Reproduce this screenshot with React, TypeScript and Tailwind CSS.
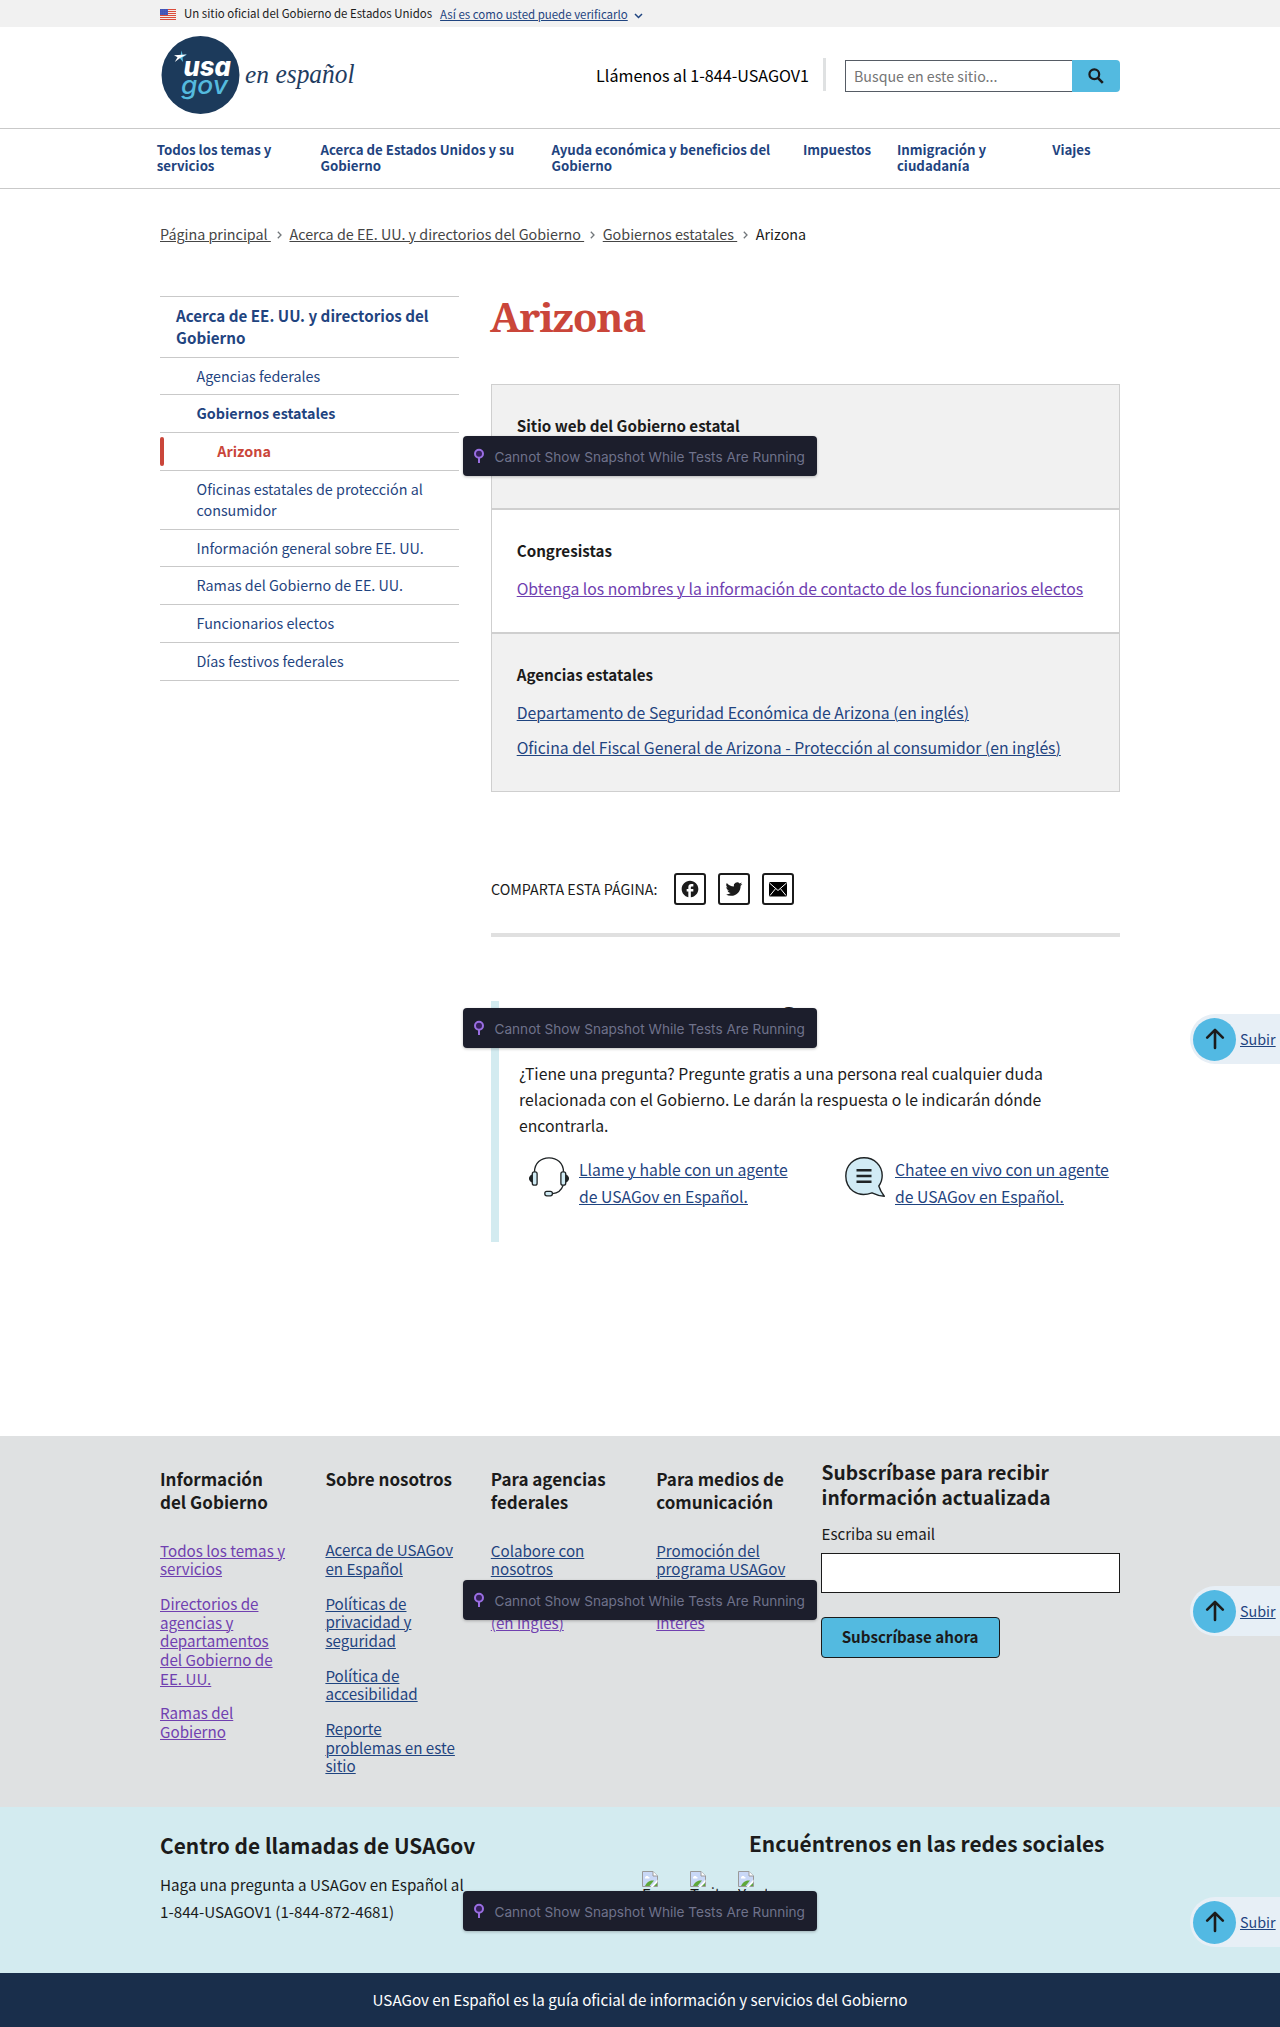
import React from 'react';

const LINK = 'text-[#1f4480] underline decoration-1 underline-offset-[1px]';
const VISITED = 'text-[#7040b0] underline decoration-1 underline-offset-[1px]';

function Lines({ text }: { text: string }) {
  return (
    <>
      {text.split('|').map((line, i) => (
        <React.Fragment key={line}>
          {i > 0 && <br />}
          {line}
        </React.Fragment>
      ))}
    </>
  );
}

function Flag() {
  return (
    <svg width="16" height="11" viewBox="0 0 16 11" className="mt-[9px] shrink-0">
      <rect width="16" height="11" fill="#f3ece9" />
      {[0, 2, 4, 6, 8, 10].map((y) => (
        <rect key={y} y={y} width="16" height="1" fill="#db4b3a" />
      ))}
      <rect width="8" height="6" fill="#3145b0" />
      {[1, 3, 5].map((y) =>
        [1, 3, 5, 7].map((x) => <rect key={`${x}-${y}`} x={x - 0.3} y={y - 0.3} width="0.7" height="0.7" fill="#dfe3ff" />),
      )}
    </svg>
  );
}

function Logo() {
  return (
    <svg width="200" height="80" viewBox="0 0 200 80" className="-mt-[2px]">
      <circle cx="40.5" cy="40" r="39" fill="#1c3a5b" />
      <path d="M21.6 15.5 L22.6 20 L27 19.5 L22.6 22.6 L23 27 L20 23.5 Z" fill="#54badf" />
      <path d="M14 20.3 L26.5 19.6 L20.5 22.8 L14.8 27 L17.5 22.3 Z" fill="#ffffff" />
      <text x="23.5" y="40.5" textLength="47.5" lengthAdjust="spacingAndGlyphs" fontFamily="Inter" fontWeight="800" fontStyle="italic" fontSize="26.5" fill="#ffffff">usa</text>
      <text x="21" y="58.5" textLength="47" lengthAdjust="spacingAndGlyphs" fontFamily="Inter" fontWeight="500" fontStyle="italic" fontSize="25" fill="#54badf">gov</text>
      <g fontFamily="'Liberation Serif', serif" fontStyle="italic" fill="#1f3d61">
        <text x="85" y="47.5" textLength="24" lengthAdjust="spacingAndGlyphs" fontSize="26">en</text>
        <text x="115.5" y="47.5" textLength="79" lengthAdjust="spacingAndGlyphs" fontSize="28">español</text>
      </g>
    </svg>
  );
}

function Chevron() {
  return (
    <svg width="5" height="8" viewBox="0 0 5 8" className="ml-[6px] mr-[7.6px] mt-[2px]" fill="none" stroke="#71767a" strokeWidth="1.3">
      <path d="M0.8 0.8 L4 4 L0.8 7.2" />
    </svg>
  );
}

function RunnerBadge({ className }: { className: string }) {
  return (
    <div className={`absolute left-[463px] flex h-10 w-[354px] items-center rounded bg-[#1c1e2c] shadow-[0_1px_3px_rgba(0,0,0,0.25)] ${className}`}>
      <svg width="12" height="16" viewBox="0 0 12 16" className="-mt-px ml-[10px]" fill="none" stroke="#9a6ee2">
        <circle cx="6" cy="5.8" r="4" strokeWidth="2" fill="#36205c" />
        <path d="M6 10 V15" strokeWidth="2" />
      </svg>
      <span className="ml-[9.5px] mt-[2px] whitespace-nowrap font-['Inter',sans-serif] text-[13.6px] leading-5 text-[#6f728b]">
        Cannot Show Snapshot While Tests Are Running
      </span>
    </div>
  );
}

function BackToTop({ className }: { className: string }) {
  return (
    <a className={`absolute right-0 flex h-[50px] w-[90px] items-center rounded-l-full bg-[#e7eff6] ${className}`}>
      <span className="ml-[3px] flex h-[43px] w-[43px] shrink-0 items-center justify-center rounded-full bg-[#52b9e3]">
        <svg width="20" height="22" viewBox="0 0 20 22" fill="none" stroke="#1b1b1b" strokeWidth="2.6" strokeLinecap="round" strokeLinejoin="round">
          <path d="M10 20 V2 M2.2 9.6 L10 1.8 L17.8 9.6" />
        </svg>
      </span>
      <span className={`-mt-px ml-1 text-[14.35px] leading-[21px] ${LINK}`}>Subir</span>
    </a>
  );
}

const navItems = [
  { text: 'Todos los temas y|servicios', width: 'w-[163.7px]' },
  { text: 'Acerca de Estados Unidos y su|Gobierno', width: 'w-[231px]' },
  { text: 'Ayuda económica y beneficios del|Gobierno', width: 'w-[251.5px]' },
  { text: 'Impuestos', width: 'w-[94px]' },
  { text: 'Inmigración y|ciudadanía', width: 'w-[155.3px]' },
  { text: 'Viajes', width: 'w-[60px]' },
];

const sideItems = [
  { text: 'Agencias federales', cls: 'h-[37px] pl-[36.5px]' },
  { text: 'Gobiernos estatales', cls: 'h-[38px] pl-[36.5px] font-bold' },
  { text: 'Arizona', cls: 'h-[38px] pl-[57.3px] font-bold text-[#ca463a]', current: true },
  { text: 'Oficinas estatales de protección al|consumidor', cls: 'h-[59px] pl-[36.5px]' },
  { text: 'Información general sobre EE. UU.', cls: 'h-[37px] pl-[36.5px]' },
  { text: 'Ramas del Gobierno de EE. UU.', cls: 'h-[38px] pl-[36.5px]' },
  { text: 'Funcionarios electos', cls: 'h-[38px] pl-[36.5px]' },
  { text: 'Días festivos federales', cls: 'h-[39px] border-b pl-[36.5px]' },
];

const footerColumns = [
  {
    title: 'Información|del Gobierno',
    offset: 'h-[73.7px]',
    links: [
      { text: 'Todos los temas y|servicios', visited: true },
      { text: 'Directorios de|agencias y|departamentos|del Gobierno de|EE. UU.', visited: true },
      { text: 'Ramas del|Gobierno', visited: true },
    ],
  },
  {
    title: 'Sobre nosotros',
    offset: 'h-[73.3px]',
    links: [
      { text: 'Acerca de USAGov|en Español', visited: false },
      { text: 'Políticas de|privacidad y|seguridad', visited: false },
      { text: 'Política de|accesibilidad', visited: false },
      { text: 'Reporte|problemas en este|sitio', visited: false },
    ],
  },
  {
    title: 'Para agencias|federales',
    offset: 'h-[73.7px]',
    links: [
      { text: 'Colabore con|nosotros', visited: false },
      { text: 'Recursos|(en inglés)', visited: true },
    ],
  },
  {
    title: 'Para medios de|comunicación',
    offset: 'h-[73.7px]',
    links: [
      { text: 'Promoción del|programa USAGov', visited: false },
      { text: 'Artículos de|interés', visited: true },
    ],
  },
];

function Header() {
  return (
    <header>
      <div className="flex h-[27px] bg-[#f1f1f1] pl-[160px]">
        <Flag />
        <span className="ml-2 mt-[5px] text-[11.46px] leading-4">Un sitio oficial del Gobierno de Estados Unidos</span>
        <span className={`ml-2 mt-[6px] text-[11.48px] leading-4 ${LINK}`}>Así es como usted puede verificarlo</span>
        <svg width="9" height="6" viewBox="0 0 9 6" className="ml-[6px] mt-[12.5px]" fill="none" stroke="#1f4480" strokeWidth="1.5">
          <path d="M1 1 L4.5 4.5 L8 1" />
        </svg>
      </div>
      <div className="flex h-[101px] items-center px-[160px] pb-[3px]">
        <Logo />
        <span className="-mt-[2px] ml-auto text-[16.13px] leading-6 text-black">Llámenos al 1-844-USAGOV1</span>
        <div className="-mt-[3px] ml-[14px] h-[33px] w-[3px] bg-[#dfe1e2]" />
        <div className="ml-[19px] flex h-8 w-[275px]">
          <div className="flex w-[227px] items-center border border-r-0 border-[#565c65] pl-[8px] pt-px text-[14.22px] text-[#757575]">
            Busque en este sitio...
          </div>
          <button className="flex w-12 items-center justify-center rounded-r bg-[#53bae0]">
            <svg width="16" height="16" viewBox="0 0 16 16" fill="none" stroke="#1b1b1b" strokeWidth="2.2">
              <circle cx="6.3" cy="6.3" r="4.9" />
              <path d="M9.8 9.8 L14.8 14.8" strokeWidth="2.6" />
            </svg>
          </button>
        </div>
      </div>
      <nav className="flex h-[61px] border-y border-[#c9c9c9] pl-[156.7px] pt-[12.6px] text-[13.27px] font-bold leading-[16.2px] text-[#1f4480]">
        {navItems.map((n) => (
          <a key={n.text} className={`shrink-0 whitespace-nowrap ${n.width}`}>
            <Lines text={n.text} />
          </a>
        ))}
      </nav>
    </header>
  );
}

function Breadcrumbs() {
  const crumb = 'whitespace-pre underline decoration-1 underline-offset-[1px]';
  return (
    <div className="mt-[33px] flex h-[23px] items-center pl-[160px] text-[14.33px] leading-[23px] text-[#454545]">
      <a className={crumb}>{'Página principal\u00a0'}</a>
      <Chevron />
      <a className={crumb}>{'Acerca de EE. UU. y directorios del Gobierno\u00a0'}</a>
      <Chevron />
      <a className={crumb}>{'Gobiernos estatales\u00a0'}</a>
      <Chevron />
      <span className="text-[#1b1b1b]">Arizona</span>
    </div>
  );
}

function Sidebar() {
  return (
    <ul className="w-[299px] text-[14.33px] leading-[21px] text-[#1f4480]">
      <li className="h-[61px] border-t border-[#c9c9c9] pl-4 pt-[7px] text-[15.18px] font-bold leading-[22px]">
        <Lines text="Acerca de EE. UU. y directorios del|Gobierno" />
      </li>
      {sideItems.map((s) => (
        <li key={s.text} className={`relative border-t border-[#c9c9c9] pt-[7px] ${s.cls}`}>
          {s.current && <span className="absolute left-0 top-1 h-[29px] w-1 rounded-full bg-[#ca463a]" />}
          <Lines text={s.text} />
        </li>
      ))}
    </ul>
  );
}

function ShareBar() {
  const box = 'flex h-8 w-8 items-center justify-center rounded-[3px] border-2 border-[#1b1b1b]';
  return (
    <div className="mt-[81px] flex items-center gap-3">
      <span className="mr-[5px] w-[166px] whitespace-nowrap text-[14.28px] leading-6">COMPARTA ESTA PÁGINA:</span>
      <a className={box}>
        <svg width="20" height="20" viewBox="0 0 24 24" fill="#1b1b1b">
          <path d="M22 12c0-5.52-4.48-10-10-10S2 6.48 2 12c0 4.84 3.44 8.87 8 9.8V15H8v-3h2V9.5C10 7.57 11.57 6 13.5 6H16v3h-2c-.55 0-1 .45-1 1v2h3v3h-3v6.95c5.05-.5 9-4.76 9-9.95z" />
        </svg>
      </a>
      <a className={box}>
        <svg width="20" height="20" viewBox="0 0 24 24" fill="#1b1b1b">
          <path d="M22 5.9c-.7.3-1.5.5-2.4.6.9-.5 1.5-1.3 1.8-2.2-.8.5-1.7.8-2.6 1a4.1 4.1 0 0 0-7 3.7A11.6 11.6 0 0 1 3.4 4.7a4.1 4.1 0 0 0 1.3 5.5c-.7 0-1.3-.2-1.9-.5 0 2 1.4 3.7 3.3 4.1-.6.2-1.2.2-1.9.1.5 1.6 2 2.8 3.8 2.8A8.3 8.3 0 0 1 2 18.4 11.6 11.6 0 0 0 8.3 20.2c7.5 0 11.9-6.3 11.6-12.2.8-.6 1.5-1.3 2.1-2.1z" />
        </svg>
      </a>
      <a className={box}>
        <svg width="18" height="16" viewBox="0 0 18 16">
          <rect x="0" y="1" width="18" height="14.5" rx="1.2" fill="#000" />
          <path d="M0.5 2 L9 9.5 L17.5 2 M1 14.5 L6.6 7.6 M17 14.5 L11.4 7.6" fill="none" stroke="#fff" strokeWidth="1" />
        </svg>
      </a>
    </div>
  );
}

function ContactBlock() {
  return (
    <section className="mt-16 h-[241px] border-l-8 border-[#d3ebf0] pl-5">
      <h2 className="flex h-[60px] w-[278px] justify-between whitespace-nowrap pt-[5px] font-['Noto_Serif',serif] text-[27px] font-bold leading-8">
        <span>¿Tiene preguntas</span>
        <span className="-mt-[5px]">?</span>
      </h2>
      <p className="whitespace-nowrap text-[15.75px] leading-[26px]">
        <Lines text="¿Tiene una pregunta? Pregunte gratis a una persona real cualquier duda|relacionada con el Gobierno. Le darán la respuesta o le indicarán dónde|encontrarla." />
      </p>
      <div className="ml-[10px] mt-[18px] flex whitespace-nowrap text-[15.75px] leading-[27px]">
        <div className="flex w-[316px] shrink-0 gap-[10px]">
          <svg width="40" height="40" viewBox="0 0 40 40" fill="none" stroke="#1f2426" strokeWidth="1.3">
            <path d="M5.5 15 C5.5 6 12 0.8 20 0.8 C28 0.8 34.5 6 34.5 15" />
            <path d="M3.5 18 C-0.2 19.500 -0.2 23.500 3.500 25 Z M36.500 18 C40.200 19.500 40.200 23.500 36.500 25 Z" fill="#1f2426" strokeWidth="1.6" />
            <rect x="3.3" y="14.8" width="4.8" height="13.4" rx="2" fill="#cfeaf3" />
            <rect x="31.9" y="14.8" width="4.8" height="13.4" rx="2" fill="#cfeaf3" />
            <path d="M34.2 28.3 C32.5 33 29 36.4 23.5 36.7" />
            <rect x="15.8" y="34.4" width="7.6" height="4.4" rx="2" fill="#cfeaf3" />
          </svg>
          <a className={`-mt-px ${LINK}`}><Lines text="Llame y hable con un agente|de USAGov en Español." /></a>
        </div>
        <div className="flex gap-[10px]">
          <svg width="40" height="40" viewBox="0 0 40 40" className="shrink-0" fill="#d1ebf5" stroke="#1f2426" strokeWidth="1.4" strokeLinejoin="round">
            <path d="M27 35.8 C12 41.5 0.8 31.5 0.8 19 C0.8 8 9 0.8 19 0.8 C29.5 0.8 37.2 8.5 37.2 18.5 C37.2 22.5 36 26 33.8 29 C34.8 32.5 36.8 36 39.3 39.2 C34.8 39 30.5 37.5 27 35.8 Z" />
            <path d="M11.5 13.2 H26.5 M11.5 18.9 H26.5 M11.5 24.7 H26.5" strokeWidth="2.5" />
          </svg>
          <a className={`-mt-px ${LINK}`}><Lines text="Chatee en vivo con un agente|de USAGov en Español." /></a>
        </div>
      </div>
    </section>
  );
}

function Content() {
  return (
    <main className="w-[629px]">
      <h1 className="-ml-px -mt-1 font-['Noto_Serif',serif] text-[40.5px] font-bold leading-[49px] tracking-[-1.15px] text-[#ca463a]">Arizona</h1>
      <div className="mt-[43px] whitespace-nowrap text-[15.76px] leading-[25px]">
        <div className="h-[125px] border border-[#cfcfcf] bg-[#f1f1f1] pl-[24.7px] pt-7">
          <h3 className="text-[15.18px] font-bold leading-6">Sitio web del Gobierno estatal</h3>
        </div>
        <div className="h-[124px] border border-[#cfcfcf] pl-[24.7px] pt-7">
          <h3 className="text-[15.18px] font-bold leading-6">Congresistas</h3>
          <p className="mt-[14px]"><a className={VISITED}>Obtenga los nombres y la información de contacto de los funcionarios electos</a></p>
        </div>
        <div className="h-[159px] border border-[#cfcfcf] bg-[#f1f1f1] pl-[24.7px] pt-7">
          <h3 className="text-[15.18px] font-bold leading-6">Agencias estatales</h3>
          <p className="mt-[14px]"><a className={LINK}>Departamento de Seguridad Económica de Arizona (en inglés)</a></p>
          <p className="mt-[10px]"><a className={LINK}>Oficina del Fiscal General de Arizona - Protección al consumidor (en inglés)</a></p>
        </div>
      </div>
      <ShareBar />
      <div className="mt-7 h-1 bg-[#e0e0e0]" />
      <ContactBlock />
    </main>
  );
}

function BrokenImage({ alt }: { alt: string }) {
  return (
    <div className="w-12">
      <svg width="16" height="16" viewBox="0 0 16 16">
        <path d="M0.5 0.5 H11 L15.5 5 V15.5 H0.5 Z" fill="#c9d8f7" stroke="#9a9a9a" />
        <path d="M11 0.5 V5 H15.5" fill="#fff" stroke="#9a9a9a" />
        <path d="M3 7 C3 4.5 6.5 4.5 6.5 6 C8 6 8 7.5 7 7.5 H3 Z" fill="#fff" />
        <path d="M3 15 C5 10 9 9 12 9.5 L7.5 15 Z" fill="#5fa83a" />
        <path d="M8.500 16 L15.500 8.500 V11 L11 16 Z" fill="#fff" />
        <path d="M12 15 L15 12 V15 Z" fill="#5fa83a" />
      </svg>
      <div className="h-5 w-[29px] overflow-hidden whitespace-nowrap text-[15.16px] leading-[12px]">{alt}</div>
    </div>
  );
}

function Footer() {
  return (
    <footer className="mt-[194px] whitespace-nowrap">
      <div className="flex h-[371px] bg-[#dfe1e2] pl-[160px]">
        {footerColumns.map((c) => (
          <div key={c.title} className="w-[165.4px] shrink-0 pt-[31px]">
            <h3 className={`text-[17.03px] font-bold leading-[23.3px] ${c.offset}`}><Lines text={c.title} /></h3>
            <ul className="flex flex-col gap-4 text-[15.17px] leading-[18.66px]">
              {c.links.map((l) => (
                <li key={l.text}>
                  <a className={l.visited ? VISITED : LINK}><Lines text={l.text} /></a>
                </li>
              ))}
            </ul>
          </div>
        ))}
        <div className="-ml-px w-[299px] shrink-0 pt-6">
          <h3 className="ml-px text-[19.2px] font-bold leading-[25px]"><Lines text="Subscríbase para recibir|información actualizada" /></h3>
          <label className="ml-px mt-[11.4px] block text-[15.1px] leading-6">Escriba su email</label>
          <div className="mt-[7.6px] h-10 border border-[#1b1b1b] bg-white" />
          <button className="mt-6 flex h-[41px] w-[179px] items-center justify-center rounded border border-[#1b1b1b] bg-[#53bae0] pb-[2px] text-[15.15px] font-bold leading-6">
            Subscríbase ahora
          </button>
        </div>
      </div>
      <div className="flex h-[166px] bg-[#d3ebf0] pl-[160px]">
        <div className="w-[482px] pt-6">
          <h3 className="text-[20.87px] font-bold leading-7">Centro de llamadas de USAGov</h3>
          <p className="mt-3 text-[15.2px] leading-[27px]"><Lines text="Haga una pregunta a USAGov en Español al|1-844-USAGOV1 (1-844-872-4681)" /></p>
        </div>
        <div className="pt-[22px]">
          <h3 className="ml-[107px] text-[20.9px] font-bold leading-7">Encuéntrenos en las redes sociales</h3>
          <div className="mt-[14px] flex">
            <BrokenImage alt="Facebook" />
            <BrokenImage alt="Twitter" />
            <BrokenImage alt="Youtube" />
          </div>
        </div>
      </div>
      <div className="h-[54px] bg-[#192e4b] pt-[14px] text-center text-[15.17px] leading-6 text-white">
        USAGov en Español es la guía oficial de información y servicios del Gobierno
      </div>
    </footer>
  );
}

export default function App() {
  return (
    <div className="relative h-[2027px] w-[1280px] overflow-hidden bg-white font-['Noto_Sans_CJK_SC','Noto_Sans',sans-serif] text-[#1b1b1b]">
      <Header />
      <Breadcrumbs />
      <div className="mt-[51px] flex h-[946px] gap-8 pl-[160px]">
        <Sidebar />
        <Content />
      </div>
      <Footer />
      <BackToTop className="top-[1014px]" />
      <BackToTop className="top-[1586px]" />
      <BackToTop className="top-[1897px]" />
      <RunnerBadge className="top-[436px]" />
      <RunnerBadge className="top-[1008px]" />
      <RunnerBadge className="top-[1580px]" />
      <RunnerBadge className="top-[1891px]" />
    </div>
  );
}
